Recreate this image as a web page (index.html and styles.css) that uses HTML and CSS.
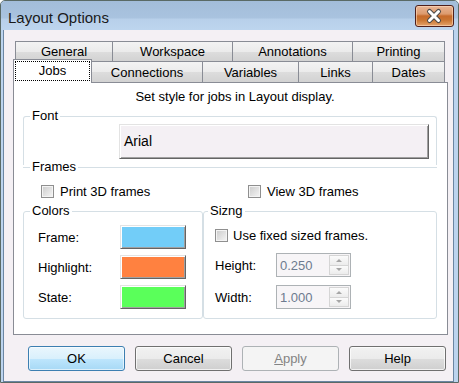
FILE: index.html
```html
<!DOCTYPE HTML>
<html>
<head>
<meta charset="utf-8">
<title>Layout Options</title>
<link rel="stylesheet" href="styles.css">
</head>
<body>
<div class="window">
	<div class="titlebar">
		<span class="title">Layout Options</span>
		<a href="javascript:;" class="close">
			<svg width="39" height="22" viewBox="0 0 39 22">
				<path d="M14.5 6.5 L23.5 15.5 M23.5 6.5 L14.5 15.5" stroke="#4a4a4a" stroke-width="5" stroke-linecap="round"/>
				<path d="M14.5 6.5 L23.5 15.5 M23.5 6.5 L14.5 15.5" stroke="#fff" stroke-width="3" stroke-linecap="round"/>
			</svg>
		</a>
	</div>
	<div class="client">
		<div class="tabs">
			<div class="row back">
				<span class="tab w1">General</span>
				<span class="tab w2">Workspace</span>
				<span class="tab w3">Annotations</span>
				<span class="tab w4">Printing</span>
			</div>
			<div class="row front">
				<span class="tab ac"><span class="focus">Jobs</span></span>
				<span class="tab w5">Connections</span>
				<span class="tab w6">Variables</span>
				<span class="tab w7">Links</span>
				<span class="tab w8">Dates</span>
			</div>
		</div>
		<div class="panel">
			<p class="desc">Set style for jobs in Layout display.</p>

			<div class="group g-font">
				<span class="legend">Font</span>
				<a href="javascript:;" class="fontbtn">Arial</a>
			</div>

			<div class="group g-frames">
				<span class="legend">Frames</span>
				<div class="checks">
					<label class="check c1"><span class="box"></span>Print 3D frames</label>
					<label class="check"><span class="box"></span>View 3D frames</label>
				</div>
			</div>

			<div class="split">
				<div class="group g-colors">
					<span class="legend">Colors</span>
					<div class="crow"><span class="clabel">Frame:</span><span class="swatch" style="background:#72cdf8"></span></div>
					<div class="crow"><span class="clabel">Highlight:</span><span class="swatch" style="background:#ff8140"></span></div>
					<div class="crow"><span class="clabel">State:</span><span class="swatch" style="background:#5aff5a"></span></div>
				</div>
				<div class="group g-size">
					<span class="legend">Sizng</span>
					<label class="check fixed"><span class="box"></span>Use fixed sized frames.</label>
					<div class="srow first"><span class="slabel">Height:</span>
						<span class="spin"><span class="val">0.250</span><span class="arrows"><i class="up"></i><i class="down"></i></span></span>
					</div>
					<div class="srow"><span class="slabel">Width:</span>
						<span class="spin"><span class="val">1.000</span><span class="arrows"><i class="up"></i><i class="down"></i></span></span>
					</div>
				</div>
			</div>
		</div>
		<div class="buttons">
			<a href="javascript:;" class="btn def">OK</a>
			<a href="javascript:;" class="btn">Cancel</a>
			<a href="javascript:;" class="btn dis"><u>A</u>pply</a>
			<a href="javascript:;" class="btn">Help</a>
		</div>
	</div>
</div>
</body>
</html>
```

FILE: styles.css
```css
* {margin:0; padding:0; box-sizing:border-box;}
body {font-family:"Liberation Sans", Arial, sans-serif; font-size:13px; color:#000; background:#fff;}
a {text-decoration:none; color:#000;}

.window {width:459px; height:383px; border:1px solid #5a6a66; border-radius:5px 5px 0 0; background:#bcd4ee; padding:0 4px 0 1px; display:flex; flex-direction:column;}
.titlebar {height:29px; display:flex; align-items:flex-start; justify-content:space-between; background:linear-gradient(#a3bdda 0, #a9c3df 17px, #b8d0ea 18px, #bdd5ee 29px); margin:0 -4px 0 -1px; padding:0 4px 0 1px; border-radius:4px 4px 0 0;}
.title {font-size:15px; line-height:16px; color:#1a1a1a; padding:9px 0 0 6px;}
.close {display:block; width:39px; height:22px; margin-top:4px; border:1px solid #4f1f1a; border-radius:3px; background:linear-gradient(#e9b594 0, #dc9a6d 40%, #c66a2a 50%, #c97532 70%, #e4a36b 100%); box-shadow:inset 0 0 0 1px rgba(255,220,190,0.6);}
.close svg {display:block; margin:-1px;}

.client {flex:1; margin-left:1px; background:#f4f0f4; border:1px solid #6b86a3; border-top:none;}

.tabs {padding-top:11px;}
.row {display:flex; height:21px;}
.row.back {margin-left:11px;}
.row.front {margin:-1px 0 0 9px; align-items:flex-end;}
.tab {display:flex; align-items:center; justify-content:center; height:21px; border:1px solid #898c95; border-bottom:none; background:linear-gradient(#f3f3f3 0, #ebebeb 50%, #dddddd 51%, #d2d2d2 100%); margin-left:-1px; line-height:15px;}
.tab:first-child {margin-left:0;}
.row.back .tab {border-bottom:1px solid #898c95;}
.w1 {width:98px;}
.w2 {width:121px;}
.w3 {width:121px;}
.w4 {width:93px;}
.w5 {width:112px;}
.w6 {width:97px;}
.w7 {width:75px;}
.w8 {width:73px;}
.tab.ac {width:79px; height:24px; margin-bottom:-1px; background:#fff; position:relative; z-index:2; padding:1px 1px 2px 1px; align-items:stretch;}
.focus {flex:1; display:flex; align-items:center; justify-content:center; border:1px dotted #000; padding-bottom:2px;}

.panel {margin-left:9px; width:435px; height:253px; border:1px solid #898c95; background:#fff; padding:0 9px 0 9px;}
.desc {text-align:center; line-height:15px; padding:6px 0 0 9px;}

.group {border:1px solid #d5dfe5; border-radius:3px; display:flex; flex-direction:column;}
.legend {align-self:flex-start; line-height:16px; margin:-9px 0 0 6px; padding:0 2px; background:#fff;}
.g-font {margin-top:12px; width:414px; border-bottom:none; border-radius:3px 3px 0 0; padding-bottom:6px;}
.fontbtn {display:flex; align-items:center; margin-left:95px; width:310px; height:35px; padding:0 0 1px 4px; font-size:14px; background:#f4f0f4; border:1px solid; border-color:#e3e3e3 #646464 #646464 #e3e3e3; box-shadow:inset 1px 1px #fff, inset -1px -1px #a0a0a0;}
.g-frames {margin-top:2px; width:414px; border-left:none; border-right:none; border-bottom:none; border-radius:0;}
.g-frames .legend {margin-left:7px;}
.checks {display:flex; padding-left:18px; margin-top:9px; height:15px;}
.check {display:flex; align-items:center; height:15px; white-space:nowrap;}
.c1 {width:207px;}
.box {width:13px; height:13px; margin-right:6px; border:1px solid #8f8f8f; background:linear-gradient(135deg, #cbcbcb, #f6f6f6); box-shadow:inset 0 0 0 1px #f4f4f4;}

.split {display:flex; margin-top:12px; height:108px;}
.g-colors {width:180px;}
.g-size {width:234px;}
.g-size .legend {margin-left:4px;}
.crow {display:flex; align-items:center; margin-top:6px; padding-left:14px;}
.clabel {width:82px;}
.swatch {width:66px; height:24px; border:1px solid; border-color:#e3e3e3 #646464 #646464 #e3e3e3; box-shadow:inset 1px 1px #fff, inset -1px -1px #a0a0a0;}

.fixed {margin:9px 0 0 11px;}
.fixed .box {margin-right:5px;}
.srow {display:flex; align-items:center; padding-left:11px; margin-top:8px;}
.srow.first {margin-top:10px;}
.slabel {width:61px;}
.spin {display:flex; width:75px; height:24px; border:1px solid #adb2b5; background:#f7f5f7; padding:1px;}
.val {flex:1; color:#6d7b8f; padding:3px 0 0 2px; line-height:15px;}
.arrows {width:20px; display:flex; flex-direction:column;}
.arrows i {flex:1; display:flex; align-items:center; justify-content:center; border:1px solid #d5d5d5; background:linear-gradient(#fbfbfb, #ececec);}
.arrows i + i {margin-top:-1px;}
.arrows i:after {content:""; border-left:3px solid transparent; border-right:3px solid transparent;}
.up:after {border-bottom:3px solid #a6a6a6;}
.down:after {border-top:3px solid #a6a6a6;}

.buttons {display:flex; gap:10px; padding:11px 0 0 24px;}
.btn {display:flex; align-items:center; justify-content:center; width:97px; height:25px; border:1px solid #707070; border-radius:3px; background:linear-gradient(#f2f2f2 0, #ebebeb 50%, #dddddd 51%, #cfcfcf 100%); box-shadow:inset 0 0 0 1px rgba(255,255,255,0.7);}
.btn.def {border-color:#3c7fb1; background:linear-gradient(#eaf6fd 0, #d9f0fc 50%, #bee6fd 51%, #a7d9f5 100%); box-shadow:inset 0 0 0 1px rgba(255,255,255,0.6);}
.btn.dis {border-color:#adb2b5; background:#f4f4f4; color:#838383; box-shadow:none;}
```
